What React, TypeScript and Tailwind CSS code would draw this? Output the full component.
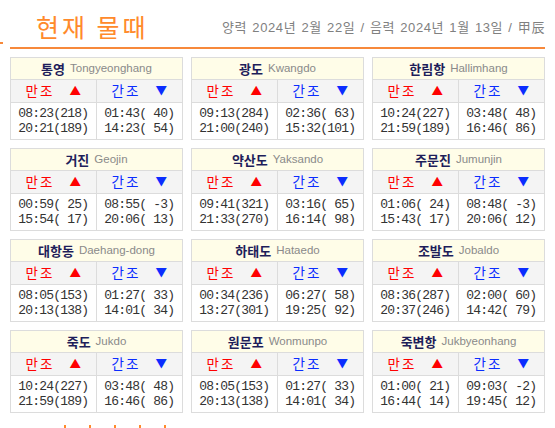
import React from "react";

type Station = {
  ko: string;
  en: string;
  high: [string, string];
  low: [string, string];
};

const stations: Station[] = [
  { ko: "통영", en: "Tongyeonghang", high: ["08:23(218)", "20:21(189)"], low: ["01:43( 40)", "14:23( 54)"] },
  { ko: "광도", en: "Kwangdo", high: ["09:13(284)", "21:00(240)"], low: ["02:36( 63)", "15:32(101)"] },
  { ko: "한림항", en: "Hallimhang", high: ["10:24(227)", "21:59(189)"], low: ["03:48( 48)", "16:46( 86)"] },
  { ko: "거진", en: "Geojin", high: ["00:59( 25)", "15:54( 17)"], low: ["08:55( -3)", "20:06( 13)"] },
  { ko: "약산도", en: "Yaksando", high: ["09:41(321)", "21:33(270)"], low: ["03:16( 65)", "16:14( 98)"] },
  { ko: "주문진", en: "Jumunjin", high: ["01:06( 24)", "15:43( 17)"], low: ["08:48( -3)", "20:06( 12)"] },
  { ko: "대항동", en: "Daehang-dong", high: ["08:05(153)", "20:13(138)"], low: ["01:27( 33)", "14:01( 34)"] },
  { ko: "하태도", en: "Hataedo", high: ["00:34(236)", "13:27(301)"], low: ["06:27( 58)", "19:25( 92)"] },
  { ko: "조발도", en: "Jobaldo", high: ["08:36(287)", "20:37(246)"], low: ["02:00( 60)", "14:42( 79)"] },
  { ko: "죽도", en: "Jukdo", high: ["10:24(227)", "21:59(189)"], low: ["03:48( 48)", "16:46( 86)"] },
  { ko: "원문포", en: "Wonmunpo", high: ["08:05(153)", "20:13(138)"], low: ["01:27( 33)", "14:01( 34)"] },
  { ko: "죽변항", en: "Jukbyeonhang", high: ["01:00( 21)", "16:44( 14)"], low: ["09:03( -2)", "19:45( 12)"] },
];

const ko = "font-['Noto_Sans_CJK_KR',sans-serif]";
const mono = "font-['Liberation_Mono',monospace]";

function Times({ rows }: { rows: [string, string] }) {
  return (
    <div className={`flex flex-col items-center justify-center ${mono} text-[13px] tracking-[-0.8px] leading-[15.5px] text-[#333] whitespace-pre`}>
      <span>{rows[0]}</span>
      <span>{rows[1]}</span>
    </div>
  );
}

function Card({ s }: { s: Station }) {
  return (
    <div className="border border-[#dcdcdc] flex flex-col">
      <div className="h-[22px] bg-[#fffde8] flex items-center justify-center gap-[5px] border-b border-[#dcdcdc]">
        <span className={`${ko} text-[13px] font-bold text-[#1e1e5a] leading-none`}>{s.ko}</span>
        <span className="font-['Liberation_Sans',sans-serif] text-[11.5px] text-[#8a8a8a] leading-none">{s.en}</span>
      </div>
      <div className="h-[23px] bg-[#f4f4f4] grid grid-cols-2 border-b border-[#dcdcdc]">
        <div className={`${ko} flex items-center justify-center gap-[15px] text-[13.5px] text-[#ff0000] border-r border-[#dcdcdc] leading-none`}>
          <span className="tracking-[2px]">만조</span>
          <span className="text-[11.5px]">▲</span>
        </div>
        <div className={`${ko} flex items-center justify-center gap-[15px] text-[13.5px] text-[#0a2cff] leading-none`}>
          <span className="tracking-[2px]">간조</span>
          <span className="text-[11.5px]">▼</span>
        </div>
      </div>
      <div className="h-[36px] grid grid-cols-2">
        <div className="border-r border-[#dcdcdc] flex items-center justify-center">
          <Times rows={s.high} />
        </div>
        <div className="flex items-center justify-center">
          <Times rows={s.low} />
        </div>
      </div>
    </div>
  );
}

export default function App() {
  return (
    <div className="w-[555px] h-[428px] bg-white overflow-hidden">
      <div className="flex items-end">
        <div className="w-[3px] h-[2px] bg-[#f7893b] mb-[5px] mr-[7px]" />
        <div className="w-[535px] h-[49px] border-b-2 border-[#f7893b] flex items-center justify-between pl-[26px] pt-[5px]">
          <span className={`${ko} text-[25px] leading-none text-[#ff8a2b] tracking-[3px]`}>현재 물때</span>
          <span className={`font-['Liberation_Sans','Noto_Sans_CJK_KR',sans-serif] text-[13px] tracking-[0.6px] [word-spacing:1px] text-[#808080] pt-[3px]`}>
            양력 2024년 2월 22일 / 음력 2024년 1월 13일 / 甲辰
          </span>
        </div>
      </div>
      <div className="ml-[10px] w-[535px] mt-[8px] grid grid-cols-3 gap-[8px]">
        {stations.map((s, i) => (
          <Card key={i} s={s} />
        ))}
      </div>
      <div className="flex gap-[23px] ml-[64px] mt-[12px]">
        {[0, 1, 2, 3, 4].map((i) => (
          <div key={i} className="w-[2px] h-[3px] bg-[#ff8a2b]" />
        ))}
      </div>
    </div>
  );
}
